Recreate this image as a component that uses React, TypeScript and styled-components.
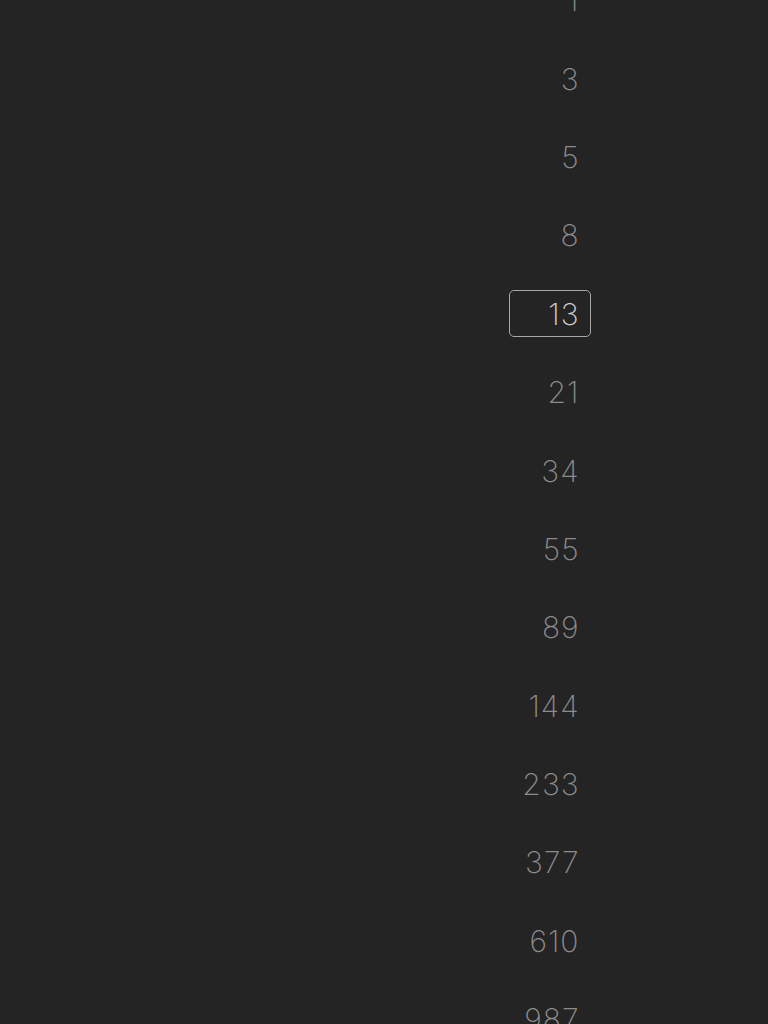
import React from "react";
import styled, { createGlobalStyle } from "styled-components";

const Global = createGlobalStyle`
  html, body { margin: 0; padding: 0; background: #242424; height: 100%; overflow: hidden; }
  #root { height: 100%; }
`;

const Page = styled.div`
  width: 768px;
  height: 1024px;
  background: #242424;
  overflow: hidden;
  font-family: Inter, "Liberation Sans", sans-serif;
`;

const Column = styled.ul`
  list-style: none;
  margin: -39px 0 0 0;
  padding: 0 0 0 509px;
  display: flex;
  flex-direction: column;
`;

const Row = styled.li`
  height: 78.4px;
  display: flex;
  align-items: center;
`;

const Value = styled.span<{ $selected?: boolean }>`
  box-sizing: border-box;
  width: 82px;
  height: 47px;
  display: flex;
  align-items: center;
  justify-content: flex-end;
  padding-right: 10.5px;
  font-size: 30px;
  font-weight: 200;
  letter-spacing: 1px;
  color: ${(p) => (p.$selected ? "#cfcfcf" : "#8c8c8c")};
  border: 1.5px solid ${(p) => (p.$selected ? "#a8a8a8" : "transparent")};
  border-radius: 5px;
`;

const values = [1, 3, 5, 8, 13, 21, 34, 55, 89, 144, 233, 377, 610, 987];

export default function App() {
  return (
    <>
      <Global />
      <Page>
        <Column>
          {values.map((v) => (
            <Row key={v}>
              <Value $selected={v === 13}>{v}</Value>
            </Row>
          ))}
        </Column>
      </Page>
    </>
  );
}
